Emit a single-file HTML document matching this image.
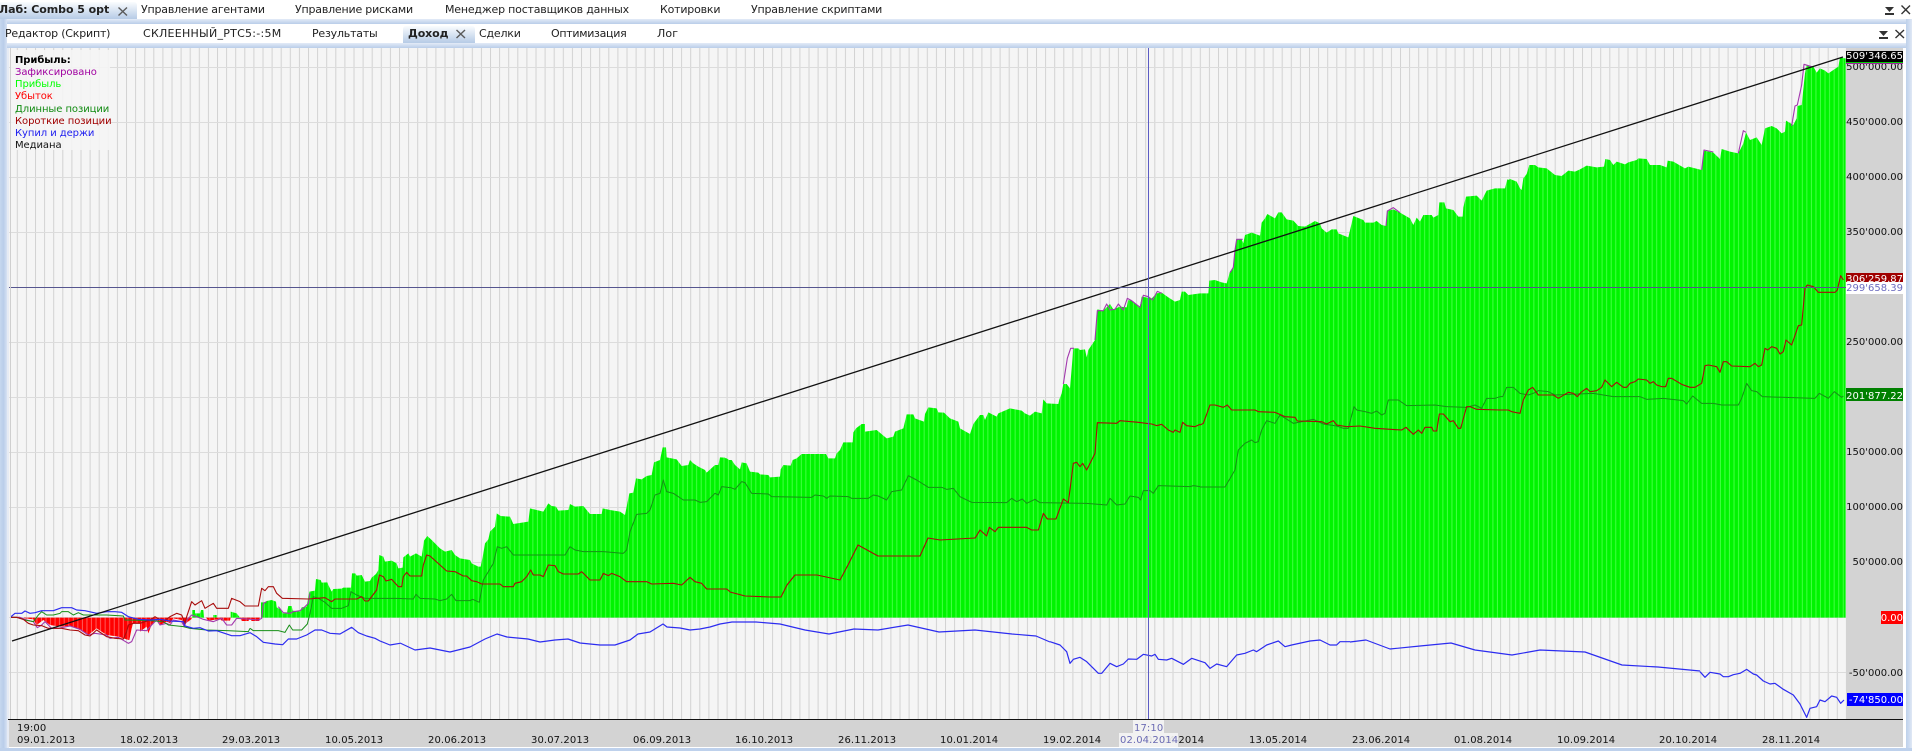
<!DOCTYPE html>
<html><head><meta charset="utf-8">
<style>
html,body{margin:0;padding:0;background:#fff;width:1912px;height:751px;overflow:hidden}
body{position:relative;font-family:"DejaVu Sans","Liberation Sans",sans-serif;color:#1a1a1a}
.a{position:absolute}
.t{position:absolute;white-space:nowrap;font-size:11px;line-height:14px;height:14px;color:#222;letter-spacing:-.2px}
.l{position:absolute;left:15px;white-space:nowrap;font-size:10px;line-height:12px;height:12px;letter-spacing:-.07px}
.y{position:absolute;right:9px;white-space:nowrap;font-size:10px;line-height:12px;height:12px;color:#111;text-align:right}
.d{position:absolute;top:735px;white-space:nowrap;font-size:10px;line-height:12px;height:12px;color:#111;letter-spacing:.1px}
svg{position:absolute;left:0;top:0}
</style></head><body>

<!-- frame bands -->
<div class="a" style="left:0;top:19px;width:1912px;height:5px;background:linear-gradient(#e3ebf7,#b9cde9)"></div>
<div class="a" style="left:0;top:43px;width:1912px;height:5px;background:linear-gradient(#e3ebf7,#b9cde9)"></div>
<div class="a" style="left:0;top:19px;width:7px;height:732px;background:linear-gradient(90deg,#c6d7ef,#b9cde9,#d7e2f3)"></div>
<div class="a" style="left:1906px;top:19px;width:6px;height:732px;background:linear-gradient(90deg,#bdd0ea,#cddbf0,#e0e8f5)"></div>
<div class="a" style="left:0;top:748px;width:1912px;height:3px;background:#bed1ec"></div>
<div class="a" style="left:7px;top:48px;width:2px;height:700px;background:#e6ebf4"></div>
<div class="a" style="left:1903px;top:48px;width:3px;height:700px;background:#fff"></div>
<div class="a" style="left:7px;top:24px;width:1899px;height:19px;background:#fff"></div>

<!-- row 1 tabs -->
<div class="a" style="left:0;top:2px;width:137px;height:17px;background:linear-gradient(#fafcfe,#b6cbe6);border-radius:0 3px 0 0"></div>
<div class="t" style="left:-1px;top:3px;font-weight:bold;letter-spacing:-.05px">Лаб: Combo 5 opt</div>
<div class="t" style="left:141px;top:3px">Управление агентами</div>
<div class="t" style="left:295px;top:3px">Управление рисками</div>
<div class="t" style="left:445px;top:3px">Менеджер поставщиков данных</div>
<div class="t" style="left:660px;top:3px">Котировки</div>
<div class="t" style="left:751px;top:3px">Управление скриптами</div>

<!-- row 2 tabs -->
<div class="a" style="left:403px;top:26px;width:72px;height:17px;background:linear-gradient(#fafcfe,#b6cbe6);border-radius:3px 3px 0 0"></div>
<div class="t" style="left:5px;top:27px">Редактор (Скрипт)</div>
<div class="t" style="left:143px;top:27px;letter-spacing:.26px">СКЛЕЕННЫЙ_РТС5:-:5М</div>
<div class="t" style="left:312px;top:27px">Результаты</div>
<div class="t" style="left:408px;top:27px;font-weight:bold;letter-spacing:-.1px">Доход</div>
<div class="t" style="left:479px;top:27px">Сделки</div>
<div class="t" style="left:551px;top:27px;letter-spacing:-.3px">Оптимизация</div>
<div class="t" style="left:657px;top:27px;letter-spacing:.1px">Лог</div>

<!-- axes background -->
<div class="a" style="left:9px;top:48px;width:1837px;height:671px;background:#f5f5f5"></div>
<div class="a" style="left:1846px;top:48px;width:57px;height:671px;background:#d3d3d3"></div>
<div class="a" style="left:9px;top:719px;width:1894px;height:28px;background:#d3d3d3"></div>

<svg width="1912" height="751" viewBox="0 0 1912 751">
<defs>
<pattern id="gx" patternUnits="userSpaceOnUse" x="7.7" y="0" width="9.1" height="10"><rect x="0" y="0" width="1" height="10" fill="#d2d2d2"/></pattern>
<pattern id="gy" patternUnits="userSpaceOnUse" x="0" y="67" width="10" height="55"><rect x="0" y="0" width="10" height="1" fill="#dcdcdc"/></pattern>
<pattern id="bars" patternUnits="userSpaceOnUse" x="1" y="0" width="4.55" height="10"><rect width="4.55" height="10" fill="#00f400"/><rect x="3.55" width="1" height="10" fill="#44ff44"/></pattern>
<pattern id="rbars" patternUnits="userSpaceOnUse" x="1" y="0" width="4.55" height="10"><rect width="4.55" height="10" fill="#ff0000"/><rect x="3.55" width="1" height="10" fill="#ff5a5a"/></pattern>
<clipPath id="cg">
<polygon transform="translate(0,560) scale(.33333)" points="577,173 577,150 585,150 585,160 600,160 603,150 610,150 612,173 640,173 640,165 650,165 650,173 692,173 692,155 710,160 720,173 782,173 785,173"/>
<polygon transform="translate(250,400) scale(.33333)" points="33,653 33,607 45,607 50,603 65,600 78,605 80,622 92,628 98,640 110,640 115,618 125,618 128,632 150,635 155,622 170,620 178,575 195,572 198,537 212,540 215,548 232,547 235,555 245,575 250,567 275,566 280,563 303,563 306,520 316,520 320,527 335,525 345,545 360,543 365,533 378,522 385,510 388,465 400,470 405,485 425,482 440,490 445,505 458,503 460,472 475,460 480,470 498,460 515,470 522,422 532,408 545,420 560,435 570,445 585,455 605,450 615,465 630,475 660,480 665,490 685,500 692,500 700,460 705,430 715,418 720,395 735,380 740,340 752,348 780,350 790,372 835,365 840,325 880,335 895,310 905,318 918,320 925,332 955,330 960,312 975,320 1000,318 1020,342 1055,342 1058,325 1080,330 1110,335 1125,345 1138,280 1150,278 1158,235 1175,238 1190,228 1205,225 1212,187 1230,180 1238,142 1248,142 1250,172 1280,178 1295,198 1315,195 1320,180 1330,190 1345,200 1365,210 1370,218 1395,195 1405,195 1410,172 1430,175 1440,182 1440,653"/>
<polygon transform="translate(720,280) scale(.33333)" points="0,1013 0,532 15,533 20,540 35,540 45,555 60,568 65,547 80,550 90,575 115,578 120,583 145,585 150,592 180,590 182,568 190,555 212,557 218,540 230,535 245,522 318,522 325,535 345,535 350,520 360,510 370,487 398,487 400,457 408,445 425,432 435,432 435,455 470,450 500,475 520,470 525,455 550,445 560,403 580,403 585,415 612,425 615,402 625,382 650,385 655,397 672,398 690,415 715,425 720,445 750,462 760,432 780,405 790,405 795,420 805,397 830,410 835,400 870,385 905,392 915,400 930,407 945,395 965,400 970,358 980,370 1015,372 1018,358 1025,340 1030,312 1040,312 1050,325 1060,205 1075,205 1080,210 1095,208 1100,232 1105,210 1115,195 1125,180 1132,88 1150,92 1170,72 1180,88 1200,80 1220,82 1225,60 1235,62 1260,80 1265,50 1295,55 1310,40 1325,38 1345,52 1365,65 1380,60 1385,35 1395,35 1400,45 1440,47 1440,1013"/>
<polygon transform="translate(1180,150) scale(.33333)" points="0,1403 0,450 5,425 15,425 25,435 60,430 85,430 88,392 105,390 125,397 140,400 150,365 160,352 165,300 170,268 185,268 190,280 195,255 215,248 240,257 245,218 255,205 262,192 285,205 295,187 305,187 320,208 340,212 355,228 375,230 405,213 420,220 425,235 440,248 455,238 470,238 475,250 505,262 520,198 550,210 555,218 580,218 590,213 605,225 618,228 622,183 640,178 660,188 690,205 700,225 710,203 720,215 730,195 755,195 760,203 775,195 778,157 793,157 798,175 820,180 835,200 848,200 850,172 858,140 890,137 905,152 920,122 945,115 975,115 980,95 990,87 1010,95 1020,115 1020,1403"/>
<polygon transform="translate(1500,50) scale(.33333)" points="0,1703 0,415 15,415 22,388 45,395 55,410 65,420 70,385 80,372 88,345 105,345 115,352 140,355 165,375 185,378 205,362 225,365 240,358 260,347 290,352 312,350 316,327 330,330 340,345 350,335 375,343 385,337 410,330 415,325 440,327 450,345 480,345 500,352 503,332 520,335 555,355 565,350 605,360 612,302 640,308 660,327 665,297 690,305 715,310 730,280 738,247 750,270 770,262 785,285 795,235 815,228 830,235 845,250 855,245 858,212 880,225 890,205 892,168 905,165 915,70 920,45 940,50 950,68 960,55 975,62 985,70 1000,60 1015,50 1020,23 1035,25 1037,25 1037,1703"/>
</clipPath>
<clipPath id="cr">
<polygon transform="translate(0,560) scale(.33333)" points="70,173 75,175 100,178 110,195 130,180 150,195 180,200 210,198 240,210 265,225 290,205 320,225 355,230 385,240 388,240 395,205 400,190 420,190 420,215 440,200 445,220 455,195 470,175 480,195 500,185 510,190 520,175 545,180 552,200 557,190 575,177 577,173"/>
<polygon transform="translate(0,560) scale(.33333)" points="618,173 625,182 640,180 660,177 665,182 690,182 692,173"/>
<polygon transform="translate(0,560) scale(.33333)" points="720,173 725,183 745,183 750,176 755,183 778,183 780,173"/>
</clipPath>
</defs>

<rect x="9" y="48" width="1837" height="671" fill="url(#gx)"/>
<rect x="9" y="48" width="1837" height="671" fill="url(#gy)"/>

<!-- bars -->
<rect x="9" y="48" width="1837" height="570" fill="url(#bars)" clip-path="url(#cg)"/>
<rect x="9" y="610" width="280" height="40" fill="url(#rbars)" clip-path="url(#cr)"/>

<g fill="none" stroke-linejoin="round">
<!-- purple (fixed) -->
<g stroke="#a238ad" stroke-width="1.1">
<polyline vector-effect="non-scaling-stroke" transform="translate(0,560) scale(.33333)" points="33,172 60,172 80,180 100,185 112,203 125,195 135,185 155,205 175,205 210,198 240,208 265,225 285,220 320,225 330,235 355,232 385,250 395,245 410,210 440,212 455,195 470,180 480,195 500,190 510,195 520,180 545,185 553,200 560,180 575,165 590,170 610,178 640,185 665,175 680,195 695,195 710,175 740,177 775,180 785,175 790,130 800,125"/>
<polyline vector-effect="non-scaling-stroke" transform="translate(0,560) scale(.33333)" points="835,140 850,158 870,160 880,155 900,152 915,140 925,130 930,100"/>
<polyline vector-effect="non-scaling-stroke" transform="translate(720,280) scale(.33333)" points="1030,312 1042,235 1052,205 1062,205"/>
<polyline vector-effect="non-scaling-stroke" transform="translate(720,280) scale(.33333)" points="1125,180 1132,92 1150,92 1160,72 1170,90 1185,88 1195,72 1210,90 1222,55 1235,62 1260,82 1270,46 1285,50 1298,60 1312,34 1326,40"/>
<polyline vector-effect="non-scaling-stroke" transform="translate(1180,150) scale(.33333)" points="150,368 160,352 165,300 170,268 188,268"/>
<polyline vector-effect="non-scaling-stroke" transform="translate(1180,150) scale(.33333)" points="618,228 622,183 640,173 660,188"/>
<polyline vector-effect="non-scaling-stroke" transform="translate(1500,50) scale(.33333)" points="605,360 612,300 640,306"/>
<polyline vector-effect="non-scaling-stroke" transform="translate(1500,50) scale(.33333)" points="715,310 730,242 738,247"/>
<polyline vector-effect="non-scaling-stroke" transform="translate(1500,50) scale(.33333)" points="875,228 885,168 892,165 905,105 912,43 935,50"/>
</g>

<!-- long positions (green) -->
<g stroke="#178f17" stroke-width="1">
<polyline vector-effect="non-scaling-stroke" transform="translate(0,560) scale(.33333)" points="33,172 50,172 75,180 100,185 115,165 125,155 140,165 160,165 180,160 185,155 205,155 220,165 235,158 250,165 280,165 320,165 370,168 375,180 450,182 490,185 505,195 550,200 570,205 620,210 680,212 745,215 750,205"/>
<polyline vector-effect="non-scaling-stroke" transform="translate(250,400) scale(.33333)" points="0,685 10,692 85,692 105,697 118,675 128,690 155,690 172,672 180,640 190,590 205,595 225,607 245,625 275,625 295,617 303,575 320,585 345,595 440,595 490,597 498,583 510,595 555,597 570,602 590,597 605,583 618,602 660,602 668,598 688,607 700,540 730,490 742,440 755,445 770,440 790,465 945,465 960,440 975,450 1000,455 1060,455 1120,460 1130,450 1140,395 1160,343 1190,340 1200,330 1215,285 1230,280 1240,240 1250,275 1270,280 1300,300 1335,300 1350,307 1370,305 1395,280 1405,285 1415,260 1440,263"/>
<polyline vector-effect="non-scaling-stroke" transform="translate(720,280) scale(.33333)" points="30,622 45,628 65,605 75,608 95,640 145,642 155,650 275,652 285,645 310,648 320,655 330,648 385,650 395,655 445,655 460,645 475,648 500,660 515,635 545,630 565,587 590,600 625,622 665,622 680,628 700,625 720,650 755,667 860,668 875,655 890,665 907,657 920,670 945,658 960,668 1100,670 1160,675 1170,655 1190,675 1215,672 1230,648 1255,652 1262,660 1270,632 1290,632 1300,640 1315,617 1410,620 1420,617 1440,620"/>
<polyline vector-effect="non-scaling-stroke" points="1200,487 1225,487 1235,470"/>
<polyline vector-effect="non-scaling-stroke" transform="translate(1180,150) scale(.33333)" points="165,960 175,900 185,890 195,880 215,870 225,878 235,875 245,840 260,812 285,820 300,795 340,820 400,808 430,822 470,828 490,835 505,835 522,770 530,780 555,785 575,790 590,783 605,795 615,790 625,750 655,750 680,767 765,765 800,770 860,772 885,765 905,775 920,745 945,745 960,740"/>
<polyline vector-effect="non-scaling-stroke" transform="translate(1500,50) scale(.33333)" points="0,1040 8,1040 20,1012 40,1012 60,1030 85,1035 100,1030 115,1022 145,1025 165,1035 280,1030 340,1040 420,1040 440,1048 490,1045 550,1052 560,1062 578,1038 605,1060 640,1060 665,1065 715,1065 725,1045 740,1000 755,1022 770,1025 787,1040 945,1045 958,1030 985,1045 1003,1025 1025,1042 1030,1038"/>
</g>

<!-- short positions (red) -->
<g stroke="#a80c0c" stroke-width="1.1">
<polyline vector-effect="non-scaling-stroke" transform="translate(0,560) scale(.33333)" points="33,172 50,172 70,178 85,190 100,195 125,197 145,205 165,205 185,205 210,210 235,212 255,225 270,228 290,210 320,230 345,235 370,237 380,215 385,195 400,190 420,190 450,180 465,170 490,185 510,170 530,160 545,165 555,190 560,170 575,125 585,135 605,122 615,145 640,130 650,145 685,145 695,115 720,125 735,138 750,138"/>
<polyline vector-effect="non-scaling-stroke" transform="translate(250,400) scale(.33333)" points="0,618 25,618 35,565 45,572 55,560 70,560 80,580 97,595 175,597 225,593 245,605 255,597 320,597 335,590 345,603 355,603 380,570 388,525 400,530 408,543 425,538 445,560 455,560 460,530 470,517 480,528 515,528 520,495 530,465 540,468 590,513 615,515 640,528 650,528 665,542 680,545 695,552 750,552 760,560 790,560 795,550 815,545 830,530 842,510 850,525 870,525 880,530 895,495 915,497 925,515 940,522 985,522 995,515 1020,540 1050,540 1060,520 1075,527 1085,520 1110,530 1130,545 1190,545 1205,552 1270,550 1295,555 1320,532 1335,545 1355,550 1370,567 1430,567 1440,575"/>
<polyline vector-effect="non-scaling-stroke" points="730,592 745,596 770,597 781,597 787,585 795,575 817,575 840,580 848,565 858,545 878,556 920,556 928,538 940,540 975,538"/>
<polyline vector-effect="non-scaling-stroke" transform="translate(720,280) scale(.33333)" points="765,775 780,750 800,768 808,742 825,755 835,742 920,742 935,750 955,750 970,700 982,717 1008,717 1030,657 1045,668 1060,550 1070,547 1080,560 1088,550 1100,570 1110,550 1125,520 1132,428 1190,430 1200,422 1255,427 1295,432 1310,437 1325,433 1345,450 1360,457 1365,450 1380,457 1388,427 1400,437 1425,440 1440,433"/>
<polyline vector-effect="non-scaling-stroke" transform="translate(1180,150) scale(.33333)" points="60,825 70,820 90,765 105,765 130,772 142,765 155,780 225,780 235,785 285,787 315,800 345,802 352,813 425,815 440,822 460,812 470,825 500,830 540,828 585,835 665,840 678,832 700,853 715,840 725,850 735,832 755,832 760,843 770,843 778,792 790,792 810,815 820,812 835,835 842,835 860,770 870,770 890,778 960,780"/>
<polyline vector-effect="non-scaling-stroke" transform="translate(1500,50) scale(.33333)" points="0,1080 25,1080 35,1085 60,1090 70,1050 85,1020 98,1012 115,1035 160,1035 175,1045 205,1027 220,1030 232,1040 243,1027 260,1015 270,1025 290,1022 305,1012 315,990 335,1010 350,997 370,1012 380,1012 390,1000 405,995 415,987 440,990 450,1000 460,995 470,1005 485,1010 497,1010 505,985 515,985 545,1003 570,1012 585,1012 605,1000 615,947 625,945 650,950 660,967 670,935 680,935 695,948 750,950 765,940 775,950 785,945 795,895 803,900 815,890 830,895 840,912 850,905 858,870 875,885 895,827 905,825 915,715 922,705 940,710 955,727 1005,727 1012,720 1022,677 1030,690"/>
</g>

<!-- buy & hold (blue) -->
<g stroke="#2c2cf0" stroke-width="1.2">
<polyline vector-effect="non-scaling-stroke" transform="translate(0,560) scale(.33333)" points="33,170 45,160 65,160 75,153 90,160 105,158 125,152 160,152 185,143 215,143 230,150 255,152 290,160 320,155 345,155 365,157 385,170 415,178 450,180 480,178 510,183 550,185 555,198 580,205 600,203 625,213 650,212 695,227 720,227 750,218 770,230 790,247 825,252 848,254 865,237 890,237 920,225 945,210 965,210 990,220 1020,222 1055,202 1075,218 1100,228 1125,235 1140,243 1170,255 1200,250"/>
<polyline vector-effect="non-scaling-stroke" points="400,643 415,650 430,648 450,652 470,647 485,639 497,634 507,637 528,639 540,642 555,640 568,639 580,643 600,645 615,645 630,640 638,634 650,632 663,624 667,627 680,628 690,630 700,629 710,627 720,624 732,622 756,622 780,624 805,630 829,634 854,629 878,630 908,625 939,632 975,630 1012,634 1036,636 1050,642"/>
<polyline vector-effect="non-scaling-stroke" transform="translate(1050,640) scale(.33333)" points="0,5 30,15 50,35 60,70 70,58 90,52 110,65 130,85 145,100 155,100 180,70 200,80 220,72 235,57 260,58 280,43 305,48 315,43 325,58 350,60 365,55 400,73 425,55 465,68 480,85 500,72 530,80 560,45 585,40 610,30 620,35 650,15 685,3 705,20 725,15 780,3 810,0 840,15 860,15 870,5 900,5"/>
<polyline vector-effect="non-scaling-stroke" points="1350,642 1366,640 1390,649 1420,646 1451,643 1475,650 1512,655 1540,650 1585,652 1622,665 1658,667 1700,671"/>
<polyline vector-effect="non-scaling-stroke" transform="translate(1700,600) scale(.33333)" points="0,215 15,232 30,217 60,222 70,230 85,230 100,224 120,220 140,208 160,222 170,225 190,243 210,252 225,250 250,268 280,285 300,312 320,352 330,325 350,320 360,300 375,305 395,288 410,292 422,310 432,300"/>
</g>

<!-- median -->
<line x1="12" y1="641" x2="1843" y2="57" stroke="#111" stroke-width="1.3"/>
<!-- crosshair -->
<line x1="9" y1="287.5" x2="1846" y2="287.5" stroke="#55558f" stroke-width="1"/>
<line x1="1148.5" y1="48" x2="1148.5" y2="719" stroke="#5c5cc4" stroke-width="1"/>
<!-- axis baseline -->
<line x1="8" y1="719.5" x2="1903" y2="719.5" stroke="#111" stroke-width="1"/>
<line x1="10.5" y1="48" x2="10.5" y2="719" stroke="#cfcfcf" stroke-width="1"/>

<!-- tab icons -->
<g stroke="#5a5a5a" stroke-width="1.4" fill="none">
<path d="M118.5 7.5 L127 15.5 M127 7.5 L118.5 15.5"/>
<path d="M456.5 30 L465 38 M465 30 L456.5 38"/>
<path d="M1901.5 5.5 L1910 14 M1910 5.5 L1901.5 14" stroke="#333"/>
<path d="M1895.5 30 L1904 38 M1904 30 L1895.5 38" stroke="#333"/>
</g>
<g fill="#333">
<path d="M1885 7h9l-4.500 5z"/><rect x="1885" y="13" width="9" height="2"/>
<path d="M1879 31h9l-4.500 5z"/><rect x="1879" y="37" width="9" height="2"/>
</g>
</svg>

<!-- legend -->
<div class="a" style="left:11px;top:50px;width:99px;height:100px;background:rgba(245,245,245,.88)"></div>
<div class="l" style="top:55px;font-weight:bold;color:#000">Прибыль:</div>
<div class="l" style="top:67px;color:#a000a0">Зафиксировано</div>
<div class="l" style="top:79px;color:#00ff00">Прибыль</div>
<div class="l" style="top:91px;color:#ff0000">Убыток</div>
<div class="l" style="top:104px;color:#108a10">Длинные позиции</div>
<div class="l" style="top:116px;color:#a00000">Короткие позиции</div>
<div class="l" style="top:128px;color:#2020f0">Купил и держи</div>
<div class="l" style="top:140px;color:#111">Медиана</div>

<!-- y axis -->
<div class="y" style="top:62px">500'000.00</div>
<div class="y" style="top:117px">450'000.00</div>
<div class="y" style="top:172px">400'000.00</div>
<div class="y" style="top:227px">350'000.00</div>
<div class="y" style="top:337px">250'000.00</div>
<div class="y" style="top:447px">150'000.00</div>
<div class="y" style="top:502px">100'000.00</div>
<div class="y" style="top:557px">50'000.00</div>
<div class="y" style="top:668px">-50'000.00</div>

<div class="a" style="left:1846px;top:62px;width:57px;height:1px;background:#00d000"></div>
<div class="a" style="left:1846px;top:63px;width:57px;height:1px;background:#a020a0"></div>
<div class="a" style="left:1846px;top:51px;width:57px;height:11px;background:#000"></div>
<div class="y" style="top:51px;color:#fff">509'346.65</div>
<div class="a" style="left:1846px;top:273px;width:57px;height:11px;background:#a00000"></div>
<div class="y" style="top:274px;color:#fff">306'259.87</div>
<div class="a" style="left:1846px;top:282px;width:57px;height:12px;background:#fff"></div>
<div class="y" style="top:283px;color:#6c6cc0">299'658.39</div>
<div class="a" style="left:1846px;top:388px;width:57px;height:13px;background:#008000"></div>
<div class="y" style="top:391px;color:#fff">201'877.22</div>
<div class="a" style="left:1881px;top:611px;width:22px;height:13px;background:#ff0000"></div>
<div class="y" style="top:613px;color:#fff">0.00</div>
<div class="a" style="left:1847px;top:693px;width:56px;height:13px;background:#0000ff"></div>
<div class="y" style="top:695px;color:#fff">-74'850.00</div>

<!-- x axis -->
<div class="d" style="left:17px;top:723px">19:00</div>
<div class="d" style="left:17px">09.01.2013</div>
<div class="d" style="left:120px">18.02.2013</div>
<div class="d" style="left:222px">29.03.2013</div>
<div class="d" style="left:325px">10.05.2013</div>
<div class="d" style="left:428px">20.06.2013</div>
<div class="d" style="left:531px">30.07.2013</div>
<div class="d" style="left:633px">06.09.2013</div>
<div class="d" style="left:735px">16.10.2013</div>
<div class="d" style="left:838px">26.11.2013</div>
<div class="d" style="left:940px">10.01.2014</div>
<div class="d" style="left:1043px">19.02.2014</div>
<div class="d" style="left:1146px">02.04.2014</div>
<div class="d" style="left:1249px">13.05.2014</div>
<div class="d" style="left:1352px">23.06.2014</div>
<div class="d" style="left:1454px">01.08.2014</div>
<div class="d" style="left:1557px">10.09.2014</div>
<div class="d" style="left:1659px">20.10.2014</div>
<div class="d" style="left:1762px">28.11.2014</div>
<div class="a" style="left:1133px;top:720px;width:31px;height:13px;background:rgba(245,245,245,.9)"></div>
<div class="a" style="left:1119px;top:733px;width:59px;height:14px;background:rgba(245,245,245,.9)"></div>
<div class="d" style="left:1134px;top:723px;color:#6c6cb4">17:10</div>
<div class="d" style="left:1120px;color:#6c6cb4">02.04.2014</div>
</body></html>
